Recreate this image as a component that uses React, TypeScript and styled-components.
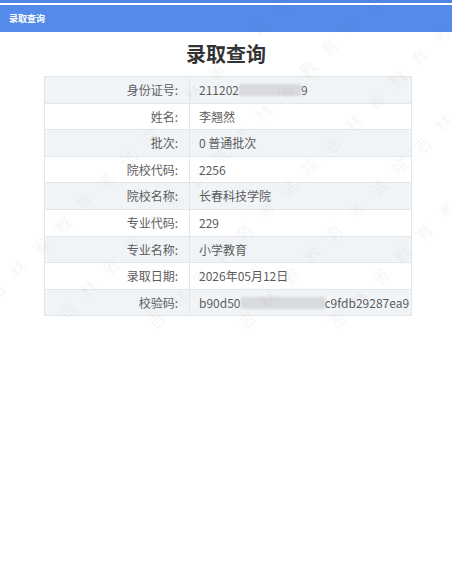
import styled, { createGlobalStyle } from 'styled-components';

const GlobalStyle = createGlobalStyle`
  html, body {
    margin: 0;
    padding: 0;
    background: #ffffff;
  }
  body {
    font-family: "Noto Sans CJK SC", "Noto Sans", sans-serif;
    color: #555;
  }
`;

const StyledPage = styled.div`
  position: relative;
  width: 452px;
  height: 569px;
  overflow: hidden;
  background: #fff;
  border-top: 3px solid #4f86e6;
`;

const StyledHeader = styled.div`
  margin-top: 2px;
  height: 27px;
  background: #548aea;
  display: flex;
  align-items: center;
  padding-left: 9px;
  color: #fff;
  font-size: 9px;
  font-weight: 700;
`;

const StyledTitle = styled.h1`
  margin: 9px 0 0;
  text-align: center;
  font-size: 20px;
  font-weight: 700;
  color: #333;
  line-height: 26px;
`;

const StyledTable = styled.div`
  margin: 9px 0 0 44px;
  width: 366px;
  border: 1px solid #e1e6ea;
  border-bottom: none;
`;

const StyledRow = styled.div<{ $shaded: boolean }>`
  display: grid;
  grid-template-columns: 145px 1fr;
  height: 25.6px;
  background: ${(p) => (p.$shaded ? '#f1f4f7' : '#ffffff')};
  border-bottom: 1px solid #e1e6ea;
  font-size: 12px;
  line-height: 25.6px;
`;

const StyledLabel = styled.div`
  text-align: right;
  padding-right: 11px;
  color: #5c5c5c;
  border-right: 1px solid #e1e6ea;
`;

const StyledValue = styled.div`
  padding-left: 9px;
  color: #5c5c5c;
  white-space: nowrap;
  overflow: hidden;
`;

const StyledMask = styled.span<{ $w: number }>`
  display: inline-block;
  width: ${(p) => p.$w}px;
  height: 12px;
  vertical-align: -1px;
  background: #d9dadc;
  filter: blur(1.2px);
`;

const StyledWatermark = styled.div`
  position: absolute;
  left: 0;
  top: 0;
  width: 452px;
  height: 345px;
  pointer-events: none;
  overflow: hidden;
`;

const StyledMarkLine = styled.div`
  position: absolute;
  white-space: nowrap;
  font-size: 17px;
  letter-spacing: 14px;
  color: rgba(120, 120, 120, 0.075);
  transform: rotate(-45deg);
  transform-origin: left center;
`;

const rows: { label: string; value: React.ReactNode }[] = [
  { label: '身份证号:', value: <>211202<StyledMask $w={62} />9</> },
  { label: '姓名:', value: '李翘然' },
  { label: '批次:', value: '0 普通批次' },
  { label: '院校代码:', value: '2256' },
  { label: '院校名称:', value: '长春科技学院' },
  { label: '专业代码:', value: '229' },
  { label: '专业名称:', value: '小学教育' },
  { label: '录取日期:', value: '2026年05月12日' },
  { label: '校验码:', value: <>b90d50<StyledMask $w={84} />c9fdb29287ea9</> },
];

const marks = [
  { left: -10, top: 280 },
  { left: 60, top: 300 },
  { left: 150, top: 310 },
  { left: 240, top: 310 },
  { left: 330, top: 310 },
];

export default function App() {
  return (
    <>
      <GlobalStyle />
      <StyledPage>
        <StyledHeader>录取查询</StyledHeader>
        <StyledTitle>录取查询</StyledTitle>
        <StyledTable>
          {rows.map((r, i) => (
            <StyledRow key={r.label} $shaded={i % 2 === 0}>
              <StyledLabel>{r.label}</StyledLabel>
              <StyledValue>{r.value}</StyledValue>
            </StyledRow>
          ))}
        </StyledTable>
        <StyledWatermark>
          {marks.map((m, i) => (
            <StyledMarkLine key={i} style={{ left: m.left, top: m.top }}>
              吉林省教育考试院吉林省教育考试院
            </StyledMarkLine>
          ))}
        </StyledWatermark>
      </StyledPage>
    </>
  );
}
